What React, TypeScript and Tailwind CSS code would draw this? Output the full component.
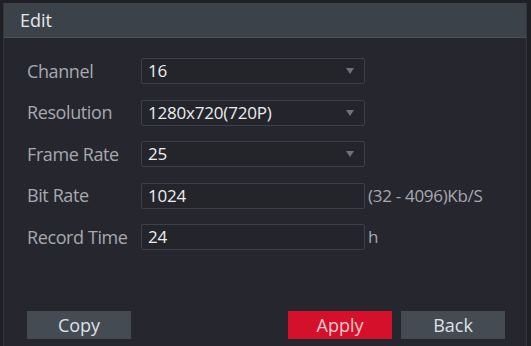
const rows = [
  { label: "Channel", value: "16", select: true },
  { label: "Resolution", value: "1280x720(720P)", select: true },
  { label: "Frame Rate", value: "25", select: true },
  { label: "Bit Rate", value: "1024", suffix: "(32 - 4096)Kb/S" },
  { label: "Record Time", value: "24", suffix: "h" },
];

export default function App() {
  return (
    <div
      className="w-[531px] h-[346px] bg-[#1f1f26] pt-[3px] pl-[3px] pr-[4px] overflow-hidden"
      style={{ fontFamily: '"Open Sans", "Noto Sans", sans-serif' }}
    >
      <div className="h-[343px] bg-[#26262e] border-x border-[#34363e] flex flex-col">
        <div className="h-[35px] bg-[#3c4249] border-b border-[#4a5058] flex items-center pl-[16px] text-[18px] text-[#e6e8ea]">
          Edit
        </div>
        <div className="flex flex-col gap-[15.5px] pt-[20px] pl-[23px]">
          {rows.map((r) => (
            <div key={r.label} className="flex items-center h-[26px]">
              <div className="w-[114px] text-[18px] text-[#a6a9af] tracking-[-0.4px] whitespace-nowrap">{r.label}</div>
              <div className="w-[224px] h-[26px] border border-[#3d4048] bg-[#24242b] rounded-[2px] flex items-center justify-between pl-[6px] pr-[10px]">
                <span className="text-[17px] text-[#eceef0] font-medium tracking-[-0.2px]">{r.value}</span>
                {r.select && (
                  <svg width="8" height="6" viewBox="0 0 8 6">
                    <path d="M0 0 L8 0 L4 6 Z" fill="#70737a" />
                  </svg>
                )}
              </div>
              {r.suffix && (
                <span className="ml-[3px] text-[17px] text-[#a6a9af] tracking-[-0.3px]">{r.suffix}</span>
              )}
            </div>
          ))}
        </div>
        <div className="mt-auto mb-[7px] flex items-center pl-[23px] pr-[21px]">
          <button className="w-[104px] h-[28px] bg-[#444b53] text-[18px] text-[#dfe2e5]">Copy</button>
          <div className="flex-1" />
          <button className="w-[104px] h-[28px] bg-[#d4102a] text-[18px] text-[#f3c8cf]">Apply</button>
          <button className="ml-[9px] w-[104px] h-[28px] bg-[#444b53] text-[18px] text-[#dfe2e5]">Back</button>
        </div>
      </div>
    </div>
  );
}
